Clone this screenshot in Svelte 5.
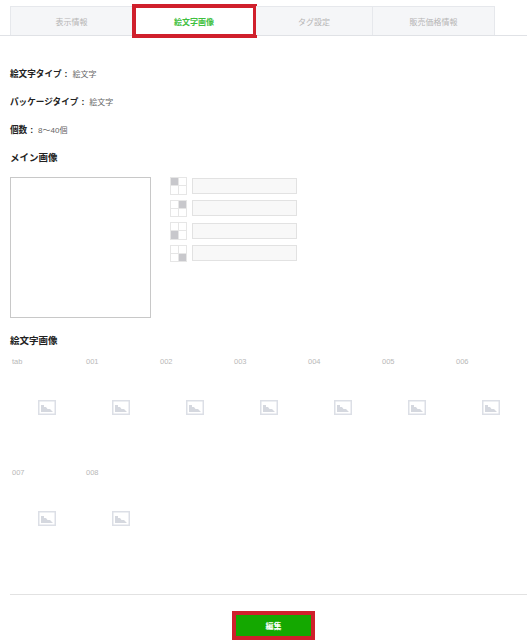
<script>
  const tabs = [
    { label: '表示情報', width: 123 },
    { label: '絵文字画像', width: 123, active: true },
    { label: 'タグ設定', width: 117 },
    { label: '販売価格情報', width: 122 }
  ];
  const info = [
    ['絵文字タイプ', '絵文字'],
    ['パッケージタイプ', '絵文字'],
    ['個数', '8～40個']
  ];
  const corners = [0, 1, 2, 3];
  const row1 = ['tab', '001', '002', '003', '004', '005', '006'];
  const row2 = ['007', '008'];
</script>

{#snippet cell(name)}
  <div class="cell">
    <span class="num">{name}</span>
    <svg class="ph" width="18" height="15" viewBox="0 0 18 15">
      <rect x="0.75" y="0.75" width="16.5" height="13.5" fill="#fff" stroke="#dcdfe6" stroke-width="1.5" />
      <path d="M3 12 V5 H6 V7 H8 L9.5 9 H12 L15 12 Z" fill="#d5d8df" />
    </svg>
  </div>
{/snippet}

<div class="page">
  <nav class="tabs">
    {#each tabs as t}
      <div class="tab" class:active={t.active} style="width: {t.width}px">{t.label}</div>
    {/each}
  </nav>

  <section class="info">
    {#each info as [k, v]}
      <p><b>{k}</b><b class="colon">:</b>{v}</p>
    {/each}
  </section>

  <h3 class="main-title">メイン画像</h3>
  <div class="main">
    <div class="preview"></div>
    <div class="sizes">
      {#each corners as c}
        <div class="size">
          <div class="quad">
            {#each corners as q}
              <i class:on={q === c}></i>
            {/each}
          </div>
          <div class="field"></div>
        </div>
      {/each}
    </div>
  </div>

  <h3 class="emoji-title">絵文字画像</h3>
  <div class="grid">
    {#each row1 as n}{@render cell(n)}{/each}
    {#each row2 as n}{@render cell(n)}{/each}
  </div>

  <footer class="foot">
    <button class="edit">編集</button>
  </footer>
</div>

<style>
  :global(body) {
    margin: 0;
    background: #fff;
  }
  .page {
    width: 527px;
    height: 640px;
    overflow: hidden;
    font-family: "Liberation Sans", "Noto Sans CJK JP", sans-serif;
    color: #666;
    font-size: 8px;
  }
  .tabs {
    display: flex;
    height: 29px;
    padding: 6px 0 0 10px;
    border-bottom: 1px solid #e0e2e6;
  }
  .tab {
    box-sizing: border-box;
    background: #f5f6f8;
    border: 1px solid #e6e8ec;
    border-bottom: 0;
    border-left-width: 0;
    color: #b5b5b5;
    display: flex;
    align-items: center;
    justify-content: center;
    position: relative;
  }
  .tab:first-child {
    border-left-width: 1px;
  }
  .tab.active {
    background: #fff;
    color: #3fbf3f;
    font-weight: bold;
  }
  .tab.active::after {
    content: "";
    position: absolute;
    left: -1px;
    right: -2px;
    top: -3px;
    bottom: -3px;
    border: 4px solid #d0202c;
  }
  .info {
    padding: 32px 10px 0;
  }
  .info p {
    margin: 0 0 16px;
    height: 12px;
    line-height: 12px;
  }
  .info b {
    color: #222;
    font-size: 8.6px;
  }
  .info .colon {
    margin: 0 5px 0 3px;
  }
  h3 {
    margin: 0;
    font-size: 9.5px;
    line-height: 12px;
    color: #222;
  }
  .main-title {
    padding: 0 10px;
  }
  .main {
    display: flex;
    padding: 13px 0 0 10px;
  }
  .preview {
    box-sizing: border-box;
    width: 141px;
    height: 141px;
    border: 1px solid #c8c8c8;
  }
  .sizes {
    margin-left: 19px;
    display: flex;
    flex-direction: column;
    gap: 5px;
  }
  .size {
    display: flex;
    gap: 5px;
    align-items: center;
  }
  .quad {
    box-sizing: border-box;
    width: 17px;
    height: 17.5px;
    display: grid;
    grid-template-columns: 1fr 1fr;
    grid-template-rows: 1fr 1fr;
    gap: 1px;
    background: #e6e6e6;
    border: 1px solid #e6e6e6;
  }
  .quad i {
    background: #fff;
  }
  .quad i.on {
    background: #c8c8cc;
  }
  .field {
    box-sizing: border-box;
    width: 105px;
    height: 16px;
    background: #f8f8f8;
    border: 1.5px solid #e2e2e2;
  }
  .emoji-title {
    padding: 17px 10px 0;
  }
  .grid {
    display: grid;
    grid-template-columns: repeat(7, 74px);
    grid-auto-rows: 111px;
    padding: 10px 0 0 12px;
  }
  .cell {
    display: flex;
    flex-direction: column;
    font-size: 7.5px;
    color: #b8b8b8;
  }
  .num {
    line-height: 10px;
  }
  .ph {
    margin: 33px 0 0 26px;
  }
  .foot {
    margin: 15px 0 0 10px;
    border-top: 1px solid #e2e2e2;
    display: flex;
    justify-content: center;
    padding-top: 20px;
  }
  .edit {
    box-sizing: border-box;
    width: 75px;
    height: 21px;
    margin-left: 10px;
    background: #14a800;
    border: 0;
    outline: 4px solid #d0202c;
    color: #fff;
    font: bold 8px "Liberation Sans", "Noto Sans CJK JP", sans-serif;
  }
</style>
